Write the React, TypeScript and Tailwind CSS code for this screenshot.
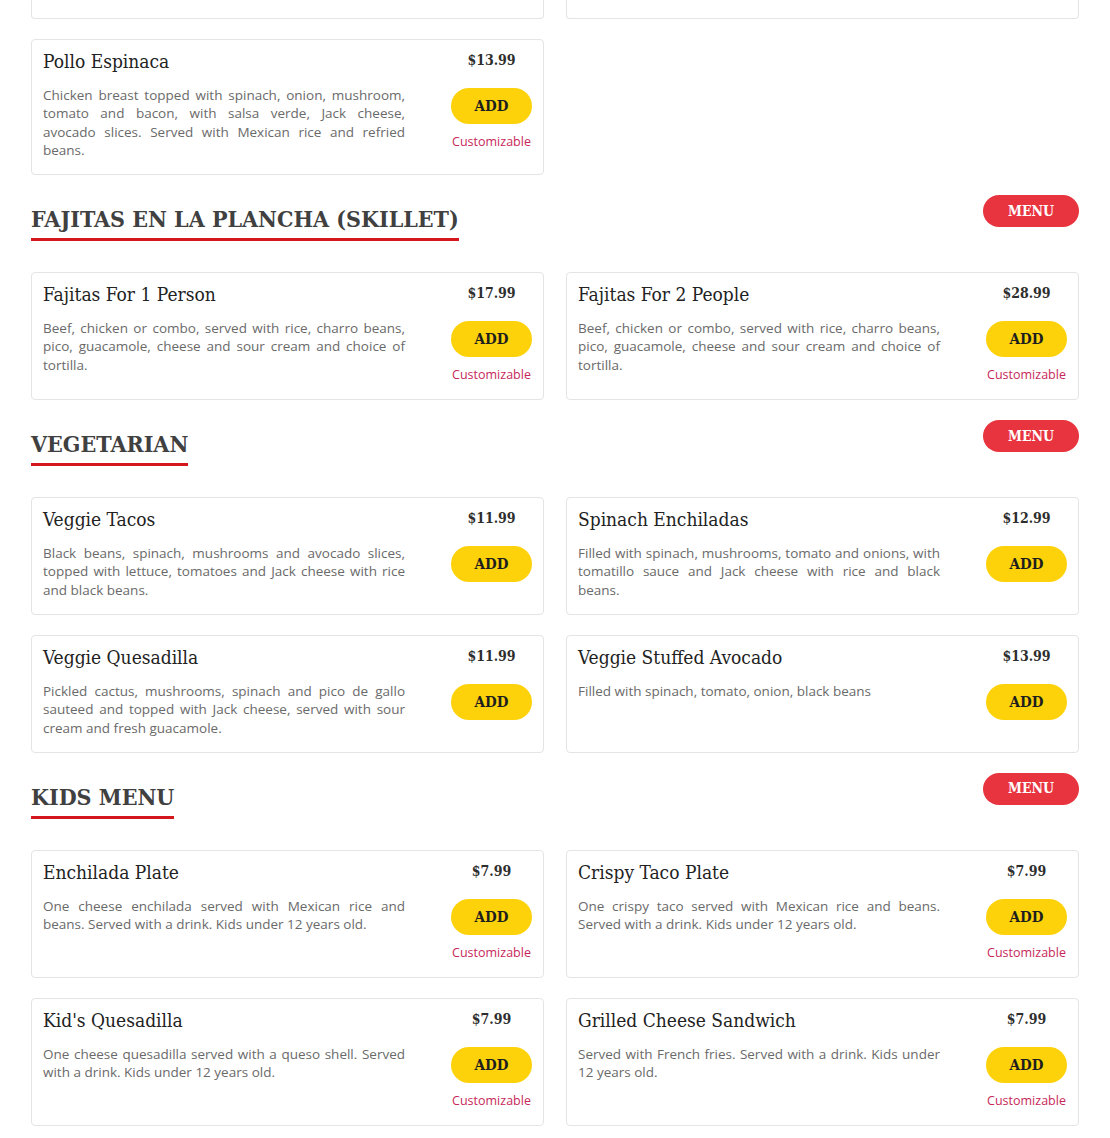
type Item = {
  name: string;
  price: string;
  desc: string;
  custom?: boolean;
};

const slab = "font-['DejaVu_Serif_Condensed','DejaVu_Serif',serif]";
const body = "font-['Open_Sans','Liberation_Sans',sans-serif]";

const sections: { title: string; items: Item[] }[] = [
  {
    title: "FAJITAS EN LA PLANCHA (SKILLET)",
    items: [
      {
        name: "Fajitas For 1 Person",
        price: "$17.99",
        desc: "Beef, chicken or combo, served with rice, charro beans, pico, guacamole, cheese and sour cream and choice of tortilla.",
        custom: true,
      },
      {
        name: "Fajitas For 2 People",
        price: "$28.99",
        desc: "Beef, chicken or combo, served with rice, charro beans, pico, guacamole, cheese and sour cream and choice of tortilla.",
        custom: true,
      },
    ],
  },
  {
    title: "VEGETARIAN",
    items: [
      {
        name: "Veggie Tacos",
        price: "$11.99",
        desc: "Black beans, spinach, mushrooms and avocado slices, topped with lettuce, tomatoes and Jack cheese with rice and black beans.",
      },
      {
        name: "Spinach Enchiladas",
        price: "$12.99",
        desc: "Filled with spinach, mushrooms, tomato and onions, with tomatillo sauce and Jack cheese with rice and black beans.",
      },
      {
        name: "Veggie Quesadilla",
        price: "$11.99",
        desc: "Pickled cactus, mushrooms, spinach and pico de gallo sauteed and topped with Jack cheese, served with sour cream and fresh guacamole.",
      },
      {
        name: "Veggie Stuffed Avocado",
        price: "$13.99",
        desc: "Filled with spinach, tomato, onion, black beans",
      },
    ],
  },
  {
    title: "KIDS MENU",
    items: [
      {
        name: "Enchilada Plate",
        price: "$7.99",
        desc: "One cheese enchilada served with Mexican rice and beans. Served with a drink. Kids under 12 years old.",
        custom: true,
      },
      {
        name: "Crispy Taco Plate",
        price: "$7.99",
        desc: "One crispy taco served with Mexican rice and beans. Served with a drink. Kids under 12 years old.",
        custom: true,
      },
      {
        name: "Kid's Quesadilla",
        price: "$7.99",
        desc: "One cheese quesadilla served with a queso shell. Served with a drink. Kids under 12 years old.",
        custom: true,
      },
      {
        name: "Grilled Cheese Sandwich",
        price: "$7.99",
        desc: "Served with French fries. Served with a drink. Kids under 12 years old.",
        custom: true,
      },
    ],
  },
];

function MenuCard({ item }: { item: Item }) {
  return (
    <div className="flex rounded border border-[#e4e4e4] bg-white px-[11px] pt-[10px] pb-[15px]">
      <div className="min-w-0 flex-1">
        <h3 className={`${slab} text-[19px] leading-[22px] text-[#222]`}>{item.name}</h3>
        <p className={`${body} mt-[14px] text-justify text-[13.5px] leading-[18.3px] text-[#6a6a6a]`}>
          {item.desc}
        </p>
      </div>
      <div className="ml-[46px] flex w-[81px] shrink-0 flex-col items-center">
        <div className={`${slab} text-[14px] font-bold leading-5 text-[#2e2e2e]`}>{item.price}</div>
        <button className={`${slab} mt-[18px] h-9 w-[81px] rounded-full bg-[#fdd20a] text-[15px] font-bold text-[#1e1e1e]`}>
          ADD
        </button>
        {item.custom && (
          <div className={`${body} mt-[9px] text-[12.5px] leading-[18px] text-[#c7285a]`}>Customizable</div>
        )}
      </div>
    </div>
  );
}

function Section({ title, items }: { title: string; items: Item[] }) {
  return (
    <section className="mt-5">
      <div className="flex items-start justify-between">
        <h2
          className={`${slab} mt-[6px] border-b-[3px] border-[#d4161d] pb-px text-[23px] font-bold leading-9 text-[#404040]`}
        >
          {title}
        </h2>
        <button className={`${slab} h-8 w-24 rounded-full bg-[#e8343f] text-[14px] font-bold text-white`}>
          MENU
        </button>
      </div>
      <div className="mt-[31px] grid grid-cols-2 gap-x-[22px] gap-y-5">
        {items.map((it) => (
          <MenuCard key={it.name} item={it} />
        ))}
      </div>
    </section>
  );
}

export default function App() {
  return (
    <div className="min-h-[1138px] bg-white px-[31px] pb-10">
      <div className="grid grid-cols-2 gap-x-[22px]">
        <div className="h-[19px] rounded-b border border-t-0 border-[#e4e4e4]" />
        <div className="h-[19px] rounded-b border border-t-0 border-[#e4e4e4]" />
      </div>
      <div className="mt-5 grid grid-cols-2 gap-x-[22px]">
        <MenuCard
          item={{
            name: "Pollo Espinaca",
            price: "$13.99",
            desc: "Chicken breast topped with spinach, onion, mushroom, tomato and bacon, with salsa verde, Jack cheese, avocado slices. Served with Mexican rice and refried beans.",
            custom: true,
          }}
        />
      </div>
      {sections.map((s) => (
        <Section key={s.title} title={s.title} items={s.items} />
      ))}
    </div>
  );
}
